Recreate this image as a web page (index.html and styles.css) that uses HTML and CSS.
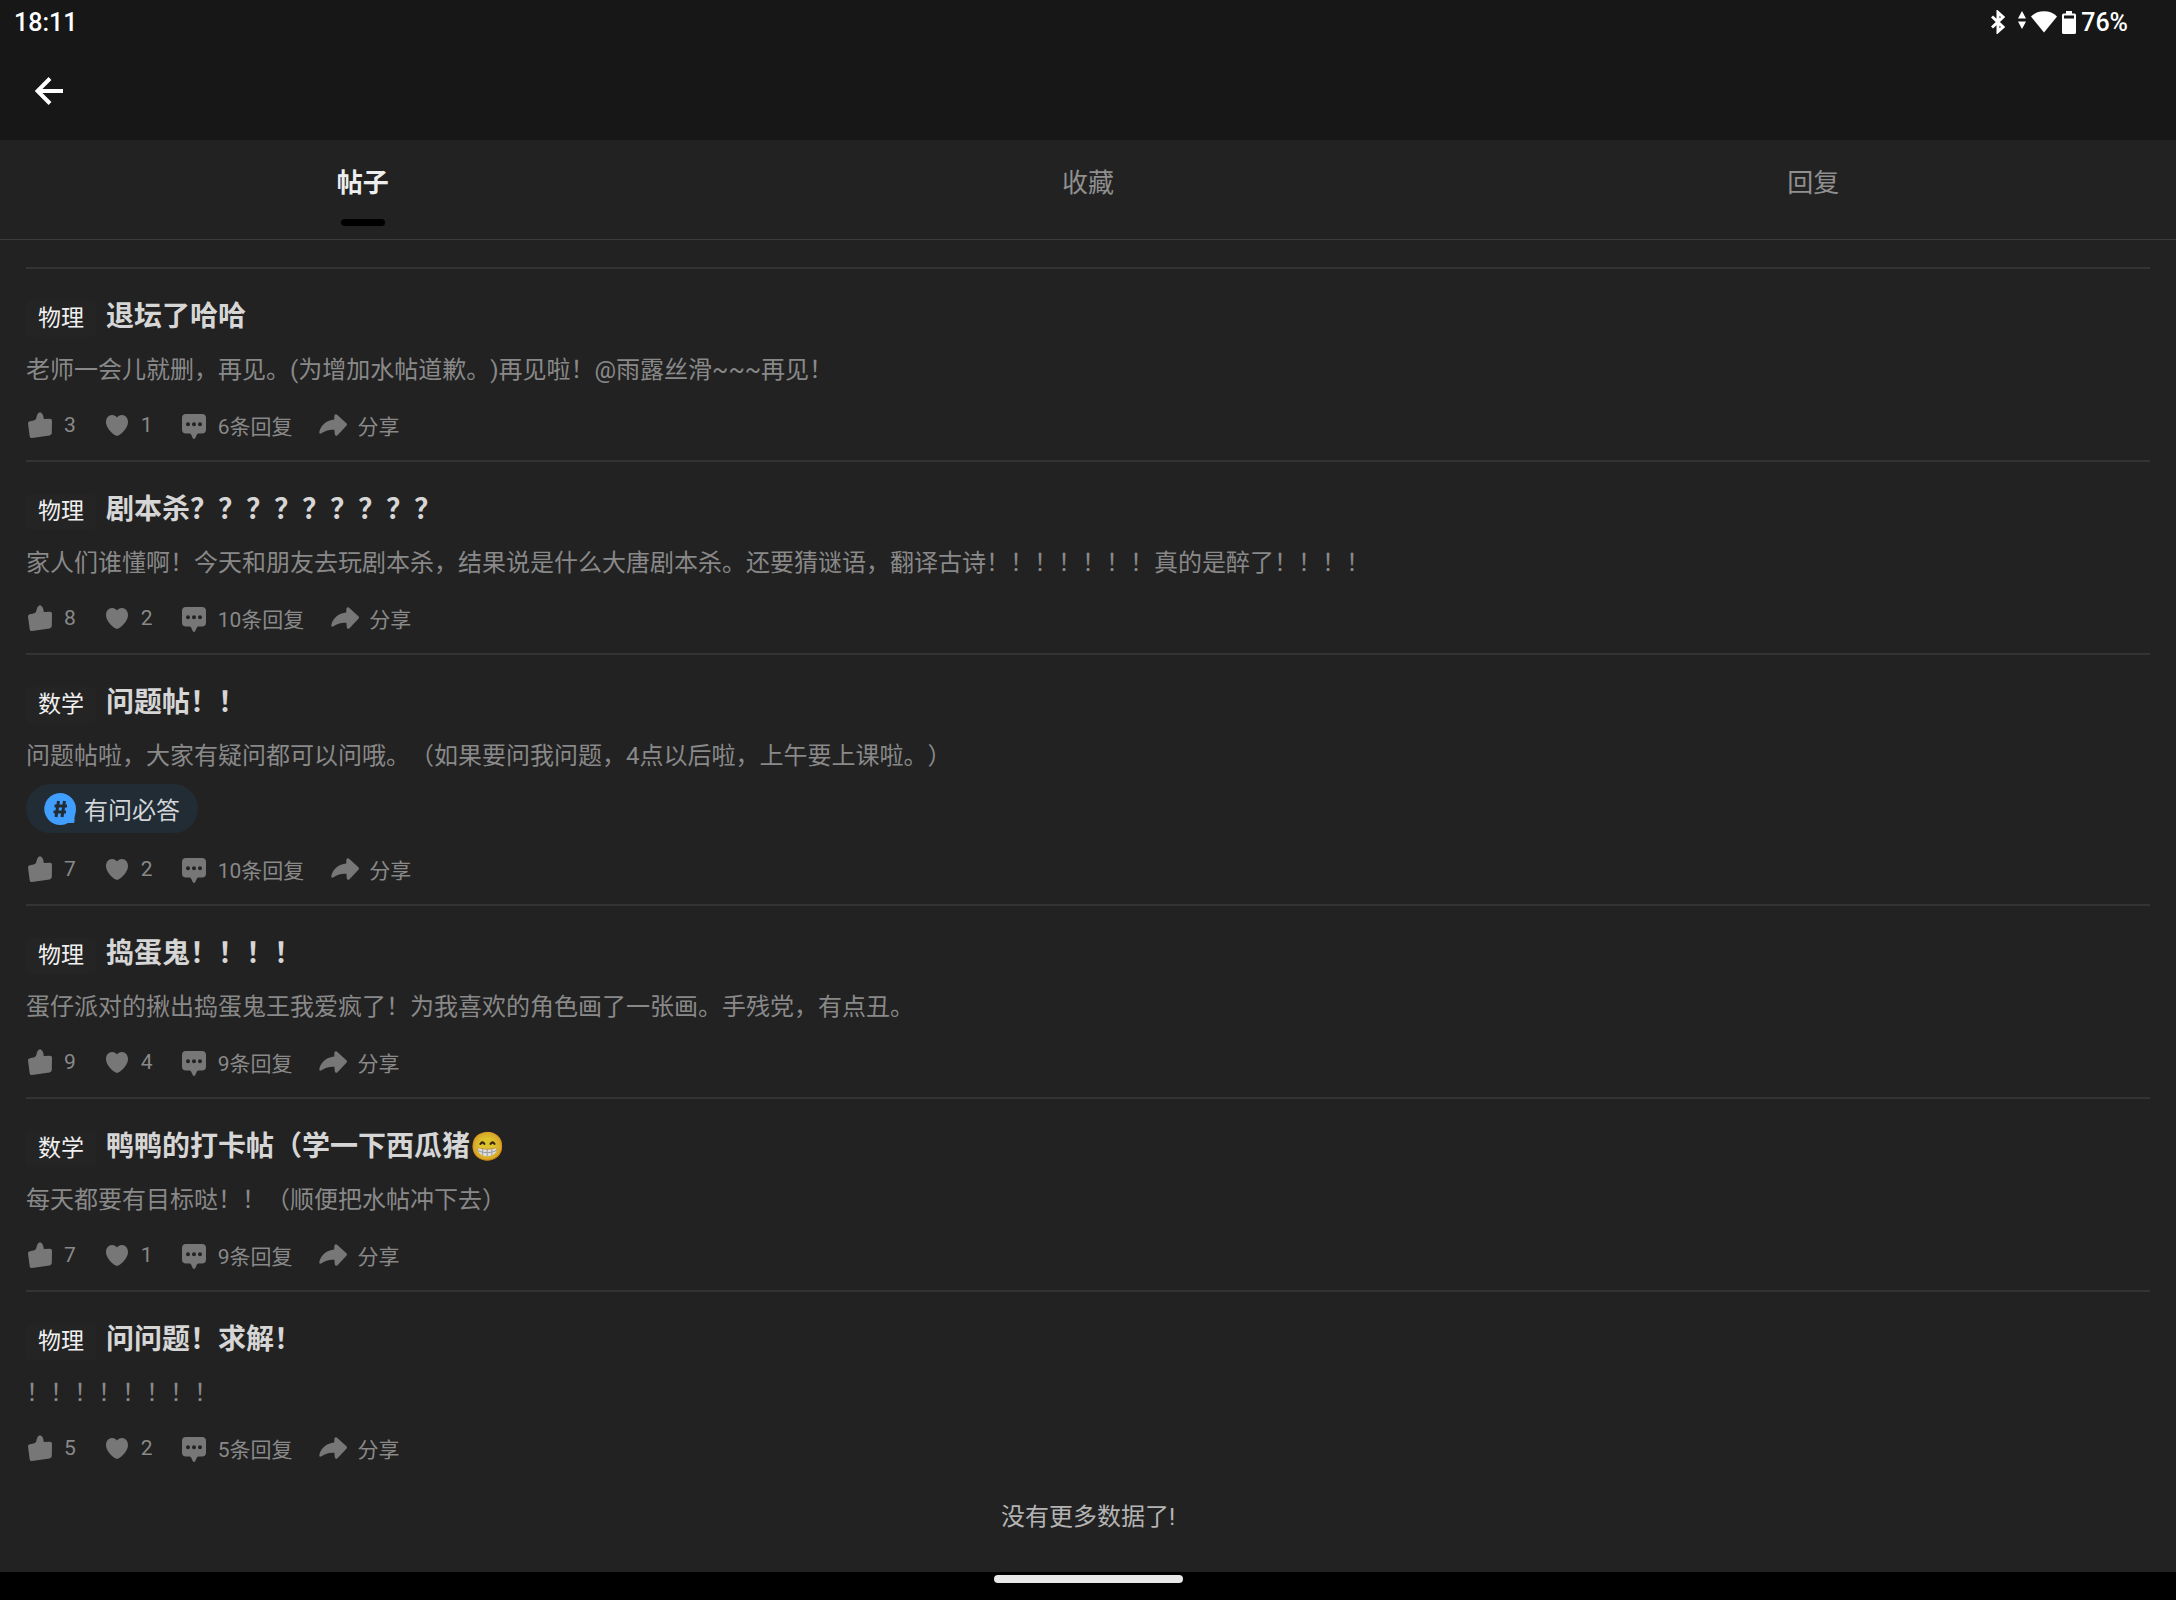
FILE: index.html
```html
<!DOCTYPE html>
<html lang="zh-CN">

<head>
  <meta charset="UTF-8">
  <meta name="viewport" content="width=device-width, initial-scale=1.0">
  <title>帖子</title>
  <link rel="stylesheet" href="styles.css">
</head>

<body>
  <!-- shared icons -->
  <svg class="sprite" aria-hidden="true">
    <symbol id="thumb" viewBox="0 0 28 28">
      <path d="M11.6 3Q14 -.4 16.4 3Q17.9 5.4 17.7 8L24 7.7Q26 7.7 26 9.7L25.8 22Q25.7 24 23.6 24.4L6 27Q4 27.3 3.7 25.2L2 12.6Q1.8 10.6 3.8 10.2L7.5 9.6Q10.4 8.6 10.6 5.4Z" />
    </symbol>
    <symbol id="heart" viewBox="0 0 28 28">
      <path d="M12.8 24.6C9 22.4 3 17 3 11C3 7 5.6 4 9 4C11.4 4 13 5 14 6.6C15 5 16.6 4 19 4C22.4 4 25 7 25 11C25 17 19 22.4 15.2 24.6Q14 25.4 12.8 24.6Z" />
    </symbol>
    <symbol id="comment" viewBox="0 0 28 28">
      <path fill-rule="evenodd" d="M6 3H22Q26 3 26 7V18.500Q26 22.500 22 22.500H18.500Q17.400 22.600 16.800 23.800L15.200 27.200Q14 28.600 12.800 27.200L11.200 23.800Q10.600 22.600 9.500 22.500H6Q2 22.500 2 18.500V7Q2 3 6 3ZM8 11.300a2 2 0 1 0 0 4a2 2 0 1 0 0-4ZM14 11.300a2 2 0 1 0 0 4a2 2 0 1 0 0-4ZM20 11.300a2 2 0 1 0 0 4a2 2 0 1 0 0-4Z" />
    </symbol>
    <symbol id="share" viewBox="0 0 28 28">
      <path d="M15.400 4.400Q16.600 2.400 18.400 3.900L27.400 12.300Q28.500 13.500 27.400 14.800L18.500 24.300Q16.500 25.600 15.800 23.500L15.400 18.800Q8 18.200 2 22.600Q.2 23.300 .3 21C2 13.500 8 9.400 15.200 8.600Z" />
    </symbol>
  </svg>

  <header class="app-header">
    <div class="status-bar">
      <span class="clock">18:11</span>
      <div class="status-icons">
        <svg class="bluetooth" viewBox="0 0 14 24" aria-hidden="true">
          <path d="M1 6.500L12 17L7 21.500V2.500L12 7L1 17.500" />
        </svg>
        <svg class="traffic" viewBox="0 0 8 22" aria-hidden="true">
          <path d="M4 0L8 7.500H0ZM4 18L0 10.500H8Z" />
        </svg>
        <svg class="wifi" viewBox="0 0 26 22" aria-hidden="true">
          <path d="M13 21.500L0 5.500Q5 .3 13 .3T26 5.500Z" />
        </svg>
        <svg class="battery" viewBox="0 0 14 23" aria-hidden="true">
          <path fill-rule="evenodd" d="M4 0H10V2.500H12.500Q14 2.500 14 4V21.500Q14 23 12.500 23H1.500Q0 23 0 21.500V4Q0 2.500 1.500 2.500H4ZM2 4.500V7.500H12V4.500Z" />
        </svg>
        <span>76%</span>
      </div>
    </div>
    <button class="back" aria-label="返回">
      <svg viewBox="0 0 28 28" aria-hidden="true">
        <path d="M28 14H3M15 1.500L2.500 14L15 26.500" />
      </svg>
    </button>
  </header>

  <nav class="tabs">
    <button class="tab active">帖子</button>
    <button class="tab">收藏</button>
    <button class="tab">回复</button>
  </nav>

  <main class="posts">
    <article class="post">
      <div class="post-head"><span class="subject">物理</span><h2>退坛了哈哈</h2></div>
      <p>老师一会儿就删，再见。(为增加水帖道歉。)再见啦！@雨露丝滑~~~再见！</p>
      <div class="actions">
        <button><svg><use href="#thumb" /></svg><span>3</span></button>
        <button><svg><use href="#heart" /></svg><span>1</span></button>
        <button><svg><use href="#comment" /></svg><span class="label">6条回复</span></button>
        <button><svg><use href="#share" /></svg><span class="label">分享</span></button>
      </div>
    </article>

    <article class="post">
      <div class="post-head"><span class="subject">物理</span><h2>剧本杀？？？？？？？？？</h2></div>
      <p>家人们谁懂啊！今天和朋友去玩剧本杀，结果说是什么大唐剧本杀。还要猜谜语，翻译古诗！！！！！！！真的是醉了！！！！</p>
      <div class="actions">
        <button><svg><use href="#thumb" /></svg><span>8</span></button>
        <button><svg><use href="#heart" /></svg><span>2</span></button>
        <button><svg><use href="#comment" /></svg><span class="label">10条回复</span></button>
        <button><svg><use href="#share" /></svg><span class="label">分享</span></button>
      </div>
    </article>

    <article class="post">
      <div class="post-head"><span class="subject">数学</span><h2>问题帖！！</h2></div>
      <p>问题帖啦，大家有疑问都可以问哦。（如果要问我问题，4点以后啦，上午要上课啦。）</p>
      <a class="topic" href="#">
        <svg viewBox="0 0 32 32" aria-hidden="true">
          <path class="bubble" d="M16 0A16 16 0 0 1 32 16C32 20 30.500 23 30.500 25V28.500Q30.500 30 29 30H24A16 16 0 1 1 16 0Z" />
          <path class="hash" d="M14.500 8L12 24M20.500 8L18 24M10.500 13H23M9.500 19H22" />
        </svg>
        <span>有问必答</span>
      </a>
      <div class="actions">
        <button><svg><use href="#thumb" /></svg><span>7</span></button>
        <button><svg><use href="#heart" /></svg><span>2</span></button>
        <button><svg><use href="#comment" /></svg><span class="label">10条回复</span></button>
        <button><svg><use href="#share" /></svg><span class="label">分享</span></button>
      </div>
    </article>

    <article class="post">
      <div class="post-head"><span class="subject">物理</span><h2>捣蛋鬼！！！！</h2></div>
      <p>蛋仔派对的揪出捣蛋鬼王我爱疯了！为我喜欢的角色画了一张画。手残党，有点丑。</p>
      <div class="actions">
        <button><svg><use href="#thumb" /></svg><span>9</span></button>
        <button><svg><use href="#heart" /></svg><span>4</span></button>
        <button><svg><use href="#comment" /></svg><span class="label">9条回复</span></button>
        <button><svg><use href="#share" /></svg><span class="label">分享</span></button>
      </div>
    </article>

    <article class="post">
      <div class="post-head"><span class="subject">数学</span><h2>鸭鸭的打卡帖（学一下西瓜猪<span class="emoji">😁</span></h2></div>
      <p>每天都要有目标哒！！（顺便把水帖冲下去）</p>
      <div class="actions">
        <button><svg><use href="#thumb" /></svg><span>7</span></button>
        <button><svg><use href="#heart" /></svg><span>1</span></button>
        <button><svg><use href="#comment" /></svg><span class="label">9条回复</span></button>
        <button><svg><use href="#share" /></svg><span class="label">分享</span></button>
      </div>
    </article>

    <article class="post">
      <div class="post-head"><span class="subject">物理</span><h2>问问题！求解！</h2></div>
      <p>！！！！！！！！</p>
      <div class="actions">
        <button><svg><use href="#thumb" /></svg><span>5</span></button>
        <button><svg><use href="#heart" /></svg><span>2</span></button>
        <button><svg><use href="#comment" /></svg><span class="label">5条回复</span></button>
        <button><svg><use href="#share" /></svg><span class="label">分享</span></button>
      </div>
    </article>

    <div class="no-more">没有更多数据了!</div>
  </main>

  <footer class="gesture-bar"><div class="handle"></div></footer>
</body>

</html>
```

FILE: styles.css
```css
* {
  box-sizing: border-box;
}

body {
  margin: 0;
  min-height: 100vh;
  display: flex;
  flex-direction: column;
  background: #222222;
  color: #898989;
  font-family: Roboto, "Noto Sans CJK SC", "Noto Color Emoji", sans-serif;
  font-size: 24px;
  text-spacing-trim: space-all;
}

button {
  margin: 0;
  padding: 0;
  border: none;
  background: none;
  color: inherit;
  font: inherit;
  cursor: pointer;
}

svg {
  display: block;
  flex-shrink: 0;
  fill: currentColor;
}

.sprite {
  position: absolute;
  width: 0;
  height: 0;
}

/* status bar and back button */
.app-header {
  height: 140px;
  background: #171717;
  color: #ffffff;
}

.status-bar {
  display: flex;
  justify-content: space-between;
  align-items: center;
  height: 44px;
  padding: 0 48px 0 14px;
  font-size: 25px;
  font-weight: 500;
}

.status-icons {
  display: flex;
  align-items: center;
  gap: 5px;
}

.bluetooth {
  width: 14px;
  height: 24px;
  margin-right: 8px;
  fill: none;
  stroke: currentColor;
  stroke-width: 3;
}

.traffic {
  width: 8px;
  height: 22px;
}

.wifi {
  width: 26px;
  height: 22px;
}

.battery {
  width: 14px;
  height: 23px;
}

.back {
  display: block;
  padding: 33px 35px;
}

.back svg {
  width: 28px;
  height: 28px;
  fill: none;
  stroke: currentColor;
  stroke-width: 4;
}

/* tabs */
.tabs {
  display: flex;
  height: 100px;
  border-bottom: 1px solid #3c3c3c;
}

.tab {
  flex: 1;
  display: flex;
  flex-direction: column;
  align-items: center;
  padding-top: 23px;
  color: #8f8f8f;
  font-size: 26px;
  line-height: 40px;
}

.tab.active {
  color: #eeeeee;
  font-weight: 700;
}

.tab.active::after {
  content: "";
  width: 44px;
  height: 7px;
  margin-top: 16px;
  border-radius: 4px;
  background: #000000;
}

/* post list */
.posts {
  flex: 1;
  padding: 27px 26px 0;
}

.post {
  padding: 28px 0 20px;
  border-top: 2px solid #333333;
}

.post-head {
  display: flex;
  align-items: flex-end;
  gap: 10px;
}

.subject {
  padding: 0 12px;
  border-radius: 4px;
  background: #242424;
  color: #f0f0f0;
  font-size: 23px;
  line-height: 36px;
}

.post h2 {
  margin: 0;
  color: #d6d6d6;
  font-size: 28px;
  font-weight: 700;
  line-height: 40px;
}

.emoji {
  opacity: 0.85;
}

.post p {
  margin: 16px 0 0;
  line-height: 34px;
}

.topic {
  display: flex;
  align-items: center;
  gap: 8px;
  width: fit-content;
  height: 49px;
  margin-top: 11px;
  padding: 0 18px;
  border-radius: 25px;
  background: #222c35;
  color: #d3d6d9;
  text-decoration: none;
}

.topic svg {
  width: 32px;
  height: 32px;
}

.bubble {
  fill: #409eff;
}

.hash {
  fill: none;
  stroke: #222c35;
  stroke-width: 3;
}

.actions {
  display: flex;
  gap: 27px;
  margin-top: 23px;
  font-size: 21px;
  line-height: 30px;
}

.topic + .actions {
  margin-top: 21px;
}

.actions button {
  display: flex;
  align-items: center;
  gap: 10px;
  height: 30px;
}

.actions svg {
  width: 28px;
  height: 28px;
  fill: #777777;
}

.actions .label {
  padding-top: 3px;
}

.no-more {
  padding: 17px 0;
  color: #b4b4b4;
  line-height: 34px;
  text-align: center;
}

/* system gesture bar */
.gesture-bar {
  display: flex;
  justify-content: center;
  height: 28px;
  padding-top: 3px;
  background: #000000;
}

.handle {
  width: 189px;
  height: 8px;
  border-radius: 4px;
  background: #e8e8e8;
}
```
